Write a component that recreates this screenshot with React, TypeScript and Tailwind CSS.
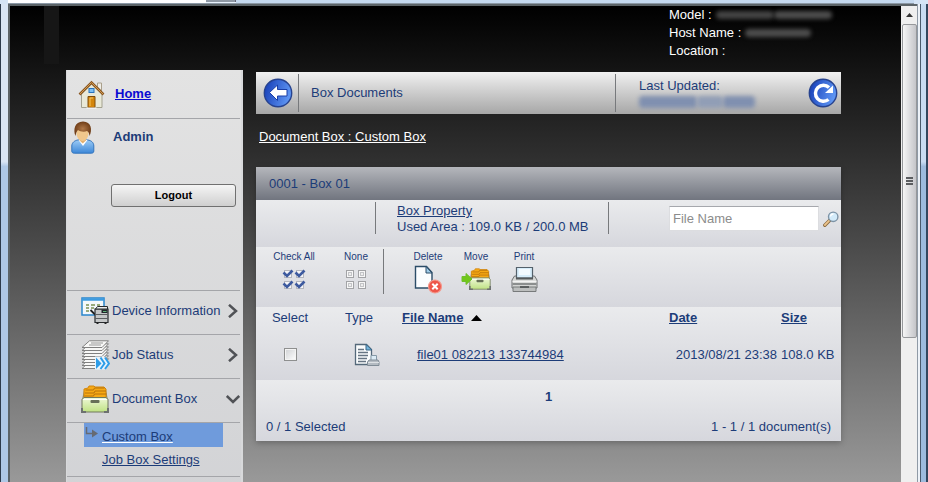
import { useState } from 'react';
import type { ReactNode } from 'react';

function HomeIcon() {
  return (
    <svg width="27" height="29" viewBox="0 0 27 29" aria-hidden="true">
      <path d="M19.500 3h4v8l-4-4z" fill="#efede6" stroke="#aaa08c" />
      <path d="M3.500 14 13.500 4 24 14v13.500H3.500z" fill="#e9e9d8" stroke="#a3a18f" />
      <path d="M1.500 14.500 13.500 2.500l12 12" fill="none" stroke="#8a5720" strokeWidth="2.600" />
      <path d="M2 14 13.500 2.500 25 14" fill="none" stroke="#d29a52" strokeWidth="1" />
      <rect x="11" y="8.500" width="5" height="4" fill="#7cc0f5" stroke="#2b74bd" />
      <path d="M10 27.500v-11h7v11z" fill="#d4860c" stroke="#7f4c0a" />
      <path d="M12 26v-8h3" fill="none" stroke="#f7c35a" />
      <path d="M8.500 28h10" stroke="#fff" strokeWidth="1" />
    </svg>
  );
}

function AdminIcon() {
  return (
    <svg width="24" height="33" viewBox="0 0 24 33" aria-hidden="true">
      <defs>
        <linearGradient id="shirt" x1="0" y1="0" x2="0" y2="1">
          <stop offset="0" stopColor="#9ccbf5" />
          <stop offset="1" stopColor="#3c87d8" />
        </linearGradient>
        <radialGradient id="hair">
          <stop offset="0" stopColor="#b07848" />
          <stop offset="1" stopColor="#6f3d17" />
        </radialGradient>
      </defs>
      <path d="M.8 30v-5c0-3.500 3-5.500 6-6h10c3.500.5 6 2.500 6 6v5c0 1.500-1 2.200-2.500 2.200h-17C1.600 32.200.8 31.500.8 30z" fill="url(#shirt)" stroke="#3475bd" />
      <path d="M7.500 19 12 25l4.500-6z" fill="#fff" />
      <path d="M8.500 16h6.500v3.500l-3.200 3-3.300-3z" fill="#e3b070" />
      <ellipse cx="11.500" cy="12.500" rx="6" ry="7.500" fill="#f0c78c" />
      <path d="M4.500 15C2 9 3.500.5 12 .5S21.500 9 18.500 15c-.2-3-1-4-2.500-5-3 1.500-7 .5-9-1-1.500 1.500-2 3-2.500 6z" fill="url(#hair)" />
    </svg>
  );
}

function DeviceIcon() {
  return (
    <svg width="28" height="27" viewBox="0 0 28 27" aria-hidden="true">
      <rect x="1" y="1" width="22" height="17" fill="#f4f8fb" stroke="#2a86cd" strokeWidth="1.500" />
      <path d="M1 2.500h22" stroke="#3d9be0" strokeWidth="2.500" />
      <path d="M5 8h3m2 0h4m2 0h3M5 11h3m2 0h3M5 14h3" stroke="#7b9054" strokeWidth="1.300" />
      <path d="M9.500 13l4.500 4.500" stroke="#222" strokeWidth="1.800" />
      <path d="M14 12h13v13.500H14z" fill="#c4c6c7" stroke="#272a2d" strokeWidth="1.200" />
      <path d="M14.500 12 16.500 9.500h10v2.500z" fill="#ecedee" stroke="#272a2d" />
      <path d="M14 17.500h13M14 21.500h13" stroke="#5b5e61" />
      <path d="M20.500 12.500h6V16h-6z" fill="#20262a" />
      <path d="M22 14.500h3.500" stroke="#62b37c" />
      <path d="M15.500 26.500h2m6 0h2" stroke="#222" strokeWidth="1.500" />
    </svg>
  );
}

function JobIcon() {
  return (
    <svg width="29" height="30" viewBox="0 0 29 30" aria-hidden="true">
      {[21, 18, 15, 12, 9, 6, 3, 0].map(y => (
        <path key={y} d="M1 7.500 8.500.8h19L21 7.500z" transform={`translate(0 ${y})`} fill="#f7f7f6" stroke="#808080" />
      ))}
      <path d="M10 3h12m-14 2h12" stroke="#999" />
      <path d="M14 16.500h9l6 6.500-5 6.500H14z" fill="#eaf4fc" />
      <path d="M15 17.500 20.500 23.500l-5.500 5.500z" fill="#2d9de8" />
      <path d="m19.500 17.500 4 6-4 5.500m4.500-11.500 4 6-4 5.500" fill="none" stroke="#2d9de8" strokeWidth="2" />
    </svg>
  );
}

function BoxIcon({ className }: { className: string }) {
  return (
    <svg className={className} viewBox="0 0 28 28" aria-hidden="true">
      <defs>
        <linearGradient id="boxFront" x1="0" y1="0" x2="0" y2="1">
          <stop offset="0" stopColor="#eef8d8" />
          <stop offset="1" stopColor="#bfe283" />
        </linearGradient>
      </defs>
      <path d="M3 5 1 15h26L25 5z" fill="#858b79" />
      <path d="M3 13V4l4-1 1-2h5l1 1h9l2 2v9z" fill="#f7a914" stroke="#d2860d" />
      <path d="M4.500 5h8l1-2h10M4 8h9l1-2h11M3.500 11h9l1-2h12" fill="none" stroke="#b8720a" />
      <path d="M1 14.500 3 12.500h22l2 2V25l-2 2H3l-2-2z" fill="url(#boxFront)" stroke="#71795e" />
      <path d="M2 14.500h24" stroke="#fff" />
      <rect x="9.500" y="15" width="9" height="3" rx="1" fill="#667057" />
      <path d="M1 23v4h4M27 23v4h-4" fill="none" stroke="#6d7170" strokeWidth="2" />
    </svg>
  );
}

function ChevronIcon({ open = false }: { open?: boolean }) {
  return (
    <svg width="14" height="14" viewBox="0 0 14 14" fill="none" stroke="#505256" strokeWidth="2.500" aria-hidden="true">
      {open ? <path d="m.8 4 6.200 6 6.200-6" /> : <path d="m3 .8 7 6.200-7 6.200" />}
    </svg>
  );
}

function BackIcon() {
  return (
    <svg width="30" height="30" viewBox="0 0 30 30" aria-hidden="true">
      <defs>
        <linearGradient id="blueOrb" x1="0" y1="0" x2="1" y2="0.3">
          <stop offset="0" stopColor="#1239b4" />
          <stop offset="1" stopColor="#5d94f2" />
        </linearGradient>
      </defs>
      <circle cx="15" cy="15" r="13.700" fill="url(#blueOrb)" stroke="#27438f" strokeWidth="1.400" />
      <path d="m6.500 14.500 8-7.500v4.500H24v6.500h-9.500v4.500z" fill="#fff" stroke="#1b3fa8" strokeWidth="1" />
    </svg>
  );
}

function RefreshIcon() {
  return (
    <svg width="30" height="30" viewBox="0 0 30 30" aria-hidden="true">
      <circle cx="15" cy="15" r="13.700" fill="url(#blueOrb)" stroke="#27438f" strokeWidth="1.400" />
      <path d="M20.500 21.500a8 8 0 1 1 .5-12" fill="none" stroke="#fff" strokeWidth="3.400" />
      <path d="M25 7.500v7.500h-8z" fill="#fff" />
    </svg>
  );
}

function SearchIcon() {
  return (
    <svg width="16" height="16" viewBox="0 0 16 16" aria-hidden="true">
      <path d="m1.800 14.200 5-5" stroke="#8b6b41" strokeWidth="3.400" strokeLinecap="round" />
      <path d="m1.900 14 4.300-4.300" stroke="#ecc48c" strokeWidth="1.800" strokeLinecap="round" />
      <circle cx="10.200" cy="5.800" r="4.700" fill="#d3ebfa" stroke="#7d93a6" strokeWidth="1.400" />
      <path d="M7.500 5.500a3 3 0 0 1 3-2.500" fill="none" stroke="#fff" strokeWidth="1.300" />
    </svg>
  );
}

const quad = [[1, 1], [13, 1], [1, 12], [13, 12]];

function CheckAllIcon() {
  return (
    <svg width="24" height="24" viewBox="0 0 24 24" aria-hidden="true">
      {quad.map(([x, y]) => (
        <g key={`${x}-${y}`} transform={`translate(${x} ${y + 1})`}>
          <rect x="1.500" y="1.500" width="7" height="7" fill="#f5f5f7" stroke="#b4b6bd" />
          <path d="m.5 3.500 3.500 3.500L9.500 1.500" fill="none" stroke="#3d5a9f" strokeWidth="2.600" />
        </g>
      ))}
    </svg>
  );
}

function NoneIcon() {
  return (
    <svg width="24" height="24" viewBox="0 0 24 24" aria-hidden="true">
      {quad.map(([x, y]) => (
        <g key={`${x}-${y}`} transform={`translate(${x} ${y + 1})`}>
          <rect x="1.500" y="1.500" width="7" height="7" fill="#f7f7f7" stroke="#a2a3a6" />
          <rect x="3.500" y="3.500" width="3" height="3" fill="#eee" stroke="#c3c4c7" />
        </g>
      ))}
    </svg>
  );
}

function DeleteIcon() {
  return (
    <svg width="28" height="29" viewBox="0 0 28 29" aria-hidden="true">
      <path d="M1.500 1.500h11l5.500 6V23h-16.500z" fill="#fbfdff" stroke="#2c4d68" strokeWidth="1.400" />
      <path d="M12 1.500V8h6z" fill="#9fcbe8" stroke="#2c4d68" />
      <circle cx="21" cy="21.500" r="6.500" fill="#ee5649" stroke="#f3998d" strokeWidth="1.200" />
      <path d="m18.300 18.800 5.400 5.400m0-5.400-5.400 5.400" stroke="#fff" strokeWidth="2" />
    </svg>
  );
}

function MoveIcon() {
  return (
    <span className="flex items-center">
      <svg className="-mr-1 z-10" width="12" height="14" viewBox="0 0 12 14" aria-hidden="true">
        <path d="M1 4.500h4V1.500L11 7l-6 5.500v-3H1z" fill="#70c719" stroke="#6fbe2c" />
      </svg>
      <BoxIcon className="w-[22px] h-6" />
    </span>
  );
}

function PrintIcon() {
  return (
    <svg width="27" height="27" viewBox="0 0 27 27" aria-hidden="true">
      <path d="M3.500 10h20l2.500 4v8H1v-8z" fill="#d4d5d4" stroke="#6e7172" />
      <path d="M5.500 1.500h16V12h-16z" fill="#d7edfa" stroke="#54616b" strokeWidth="1.200" />
      <path d="M8 3h11v6H8z" fill="#f3faff" />
      <path d="M5 12.500h17" stroke="#55595b" strokeWidth="2" />
      <path d="M1.500 15.500h24" stroke="#f3f3f3" strokeWidth="1.500" />
      <path d="M1.500 18h24" stroke="#8b8e8e" strokeWidth="2" />
      <path d="M2 21h23v4.500H2z" fill="#bcbebe" stroke="#777a7b" />
      <path d="M9 21h9" stroke="#44484a" strokeWidth="1.500" />
    </svg>
  );
}

function FileTypeIcon() {
  return (
    <svg width="26" height="24" viewBox="0 0 26 24" aria-hidden="true">
      <path d="M1.500 1.500h11l5 5V21.500h-16z" fill="#fafcfd" stroke="#55697a" strokeWidth="1.300" />
      <path d="M12 1.500V7h6z" fill="#75b5dc" stroke="#3b6686" />
      <path d="M4 6.500h6M4 9.500h10M4 12.500h10M4 15.500h9M4 18.500h8" stroke="#677583" strokeWidth="1.300" />
      <path d="M17 12.500h5.500V18H17z" fill="#dcebf5" stroke="#8599a7" />
      <path d="M15 17h9l1 2v3.500H13.500V19z" fill="#b4bbc2" stroke="#808c96" />
      <path d="M14 19.500h11" stroke="#dde1e4" />
    </svg>
  );
}

function Tool({ label, children }: { label: string; children: ReactNode }) {
  return (
    <button type="button" className="w-12 h-[46px] flex flex-col items-center text-[10px] leading-3 whitespace-nowrap cursor-pointer">
      <span className="pt-[2px]">{label}</span>
      <span className="h-8 flex items-center">{children}</span>
    </button>
  );
}

function NavItem({ icon, label, open }: { icon: ReactNode; label: string; open?: boolean }) {
  return (
    <a href="#" className="h-11 mr-px pb-1 pl-[14px] flex items-center border-b border-[#a4a5a9]">
      <span className="w-[31px] shrink-0 flex">{icon}</span>
      <span className="flex-1 whitespace-nowrap">{label}</span>
      <ChevronIcon open={open} />
    </a>
  );
}

// Values that are kept private show only as a smudge
function Redacted({ className }: { className: string }) {
  return <span className={`inline-block rounded-sm blur-[2px] ${className}`} aria-hidden="true" />;
}

function Sidebar() {
  return (
    <nav className="w-[177px] shrink-0 bg-linear-to-b from-[#e3e3e3] to-[#d0d1d4] border-l border-r-2 border-[#d8d9db] text-[#1c3c78]">
      <a href="#" className="h-[49px] mr-px pl-[11px] flex items-center gap-[10px] border-b border-[#a4a5a9] font-bold text-[#0a0ad2] underline">
        <HomeIcon />
        Home
      </a>
      <div className="h-[172px] mr-px border-b border-[#a4a5a9]">
        <div className="h-9 pl-1 flex items-center gap-[18px] font-bold">
          <AdminIcon />
          Admin
        </div>
        <div className="pt-[29px] pl-11">
          <button
            type="button"
            className="w-[125px] h-[23px] rounded-[3px] border border-[#707070] bg-linear-to-b from-[#f5f5f5] to-[#cfcfcf] text-[11px] font-bold text-black"
          >
            Logout
          </button>
        </div>
      </div>
      <NavItem icon={<DeviceIcon />} label="Device Information" />
      <NavItem icon={<JobIcon />} label="Job Status" />
      <NavItem icon={<BoxIcon className="w-7 h-7" />} label="Document Box" open />
      <div className="h-[54px] mr-px pl-[17px] border-b border-[#a4a5a9]">
        <div className="w-[139px] h-6 pt-[3px] flex items-center bg-[#6f9bdc]">
          <svg className="mb-2 ml-px mr-1" width="13" height="12" viewBox="0 0 13 12" aria-hidden="true">
            <path d="M1.500 0v6.500H8" fill="none" stroke="#666a72" strokeWidth="1.500" />
            <path d="M7 2.500 13 6.500l-6 4z" fill="#666a72" />
          </svg>
          <a href="#" className="underline decoration-white">Custom Box</a>
        </div>
        <a href="#" className="ml-[18px] leading-[26px] underline">Job Box Settings</a>
      </div>
    </nav>
  );
}

function TitleBar() {
  return (
    <div className="h-[42px] py-[2px] flex bg-linear-to-b from-[#f1f1f1] to-[#a7a7a7]">
      <button type="button" aria-label="Back" className="w-[43px] pl-[7px] border-r border-[#77797c]">
        <BackIcon />
      </button>
      <h1 className="flex-1 pl-3 leading-[38px]">Box Documents</h1>
      <div className="w-[226px] pl-[23px] pr-[3px] flex items-center justify-between border-l border-[#77797c]">
        <div className="flex flex-col gap-[2px] pb-px">
          <span className="leading-4">Last Updated:</span>
          <span className="flex">
            <Redacted className="w-[58px] h-3 bg-[#8090b0]" />
            <Redacted className="w-[26px] h-3 bg-[#919eb6]" />
            <Redacted className="w-8 h-3 bg-[#8090b0]" />
          </span>
        </div>
        <button type="button" aria-label="Refresh"><RefreshIcon /></button>
      </div>
    </div>
  );
}

const rowShade = 'bg-linear-to-b from-[#eaebed] to-[#d6d7dd]';

function DocumentPanel() {
  const [checked, setChecked] = useState(false);
  const [query, setQuery] = useState('');

  return (
    <section className="mt-[22px] shadow-[0_2px_6px_rgba(0,0,0,0.25)]">
      <h2 className="h-[33px] pl-[13px] leading-[34px] bg-linear-to-b from-[#b5b7bc] to-[#71757f]">0001 - Box 01</h2>

      {/* Box properties and search */}
      <div className={`h-[47px] pt-[2px] pl-[119px] pr-[2px] flex items-start ${rowShade}`}>
        <div className="w-[234px] h-8 pt-px pl-[21px] border-x border-[#77797c] whitespace-nowrap leading-4">
          <a href="#" className="underline">Box Property</a>
          <p>Used Area : 109.0 KB / 200.0 MB</p>
        </div>
        <form className="ml-auto mt-1 flex items-center gap-1" onSubmit={e => e.preventDefault()}>
          <input
            type="text"
            aria-label="File Name"
            placeholder="File Name"
            value={query}
            onChange={e => setQuery(e.target.value)}
            className="w-[150px] h-[25px] px-[3px] bg-white border border-[#dcdde0] border-t-[#a6a8ad] placeholder:text-[#8c8c8c] outline-none"
          />
          <button type="submit" aria-label="Search"><SearchIcon /></button>
        </form>
      </div>

      {/* Toolbar */}
      <div className={`h-[60px] pt-[2px] pl-[14px] flex ${rowShade}`}>
        <div className="w-[114px] h-[45px] pr-[3px] flex justify-between border-r border-[#77797c]">
          <Tool label="Check All"><CheckAllIcon /></Tool>
          <Tool label="None"><NoneIcon /></Tool>
        </div>
        <div className="ml-5 flex">
          <Tool label="Delete"><DeleteIcon /></Tool>
          <Tool label="Move"><MoveIcon /></Tool>
          <Tool label="Print"><PrintIcon /></Tool>
        </div>
      </div>

      <table className={`w-full table-fixed text-left ${rowShade}`}>
        <thead>
          <tr className="h-[22px]">
            <th className="w-[68px] p-0 text-center font-normal">Select</th>
            <th className="w-[70px] p-0 text-center font-normal">Type</th>
            <th className="py-0 pl-2">
              <a href="#" className="underline">File Name</a>
              <svg className="inline ml-2 mb-px" width="11" height="6" viewBox="0 0 11 6" aria-hidden="true">
                <path d="M5.500 0 11 6H0z" fill="#000" />
              </svg>
            </th>
            <th className="w-[112px] p-0"><a href="#" className="underline">Date</a></th>
            <th className="w-[60px] p-0"><a href="#" className="underline">Size</a></th>
          </tr>
        </thead>
        <tbody>
          <tr className="h-[51px]">
            <td className="p-0 text-center">
              <input
                type="checkbox"
                aria-label="Select file01 082213 133744984"
                checked={checked}
                onChange={e => setChecked(e.target.checked)}
                className="block mx-auto w-[13px] h-[13px] appearance-none border border-[#8e8f8f] bg-linear-to-br from-[#cfd1d4] to-white outline outline-[#f4f4f4] -outline-offset-2 checked:bg-[#33519b]"
              />
            </td>
            <td className="py-0 pl-[30px] pr-0"><FileTypeIcon /></td>
            <td className="py-0 pl-[23px]"><a href="#" className="underline">file01 082213 133744984</a></td>
            <td className="py-0 pl-0 pr-1 text-right whitespace-nowrap">2013/08/21 23:38</td>
            <td className="p-0 whitespace-nowrap">108.0 KB</td>
          </tr>
        </tbody>
      </table>

      {/* Paging */}
      <div className={`h-[61px] pt-[9px] ${rowShade}`}>
        <p className="text-center font-bold leading-4">1</p>
        <div className="pt-[14px] px-[10px] flex justify-between leading-4">
          <span>{checked ? 1 : 0} / 1 Selected</span>
          <span>1 - 1 / 1 document(s)</span>
        </div>
      </div>
    </section>
  );
}

export default function App() {
  return (
    <div className="h-screen flex flex-col overflow-hidden bg-[#d5e4f5] font-['Liberation_Sans',Arial,sans-serif] text-[13px] text-[#1c3c78]">
      {/* Bottom edge of the browser's tab strip */}
      <div className="h-1 shrink-0 ml-2 mr-[14px] flex border-b border-[#8b98a5] bg-[#e9f2fc]">
        <div className="w-[198px] bg-white" />
        <div className="w-[30px] h-[2px] bg-[#8f99a5] border-r border-[#667]" />
        <div className="flex-1 bg-[#c5d9ef]" />
      </div>

      <div className="flex-1 min-h-0 flex">
        <div className="w-2 shrink-0 border-l border-[#2d3b4c] bg-linear-to-b from-[#d9e5f4] from-33% to-[#aec8e6] to-34%" />
        <div className="flex-1 min-w-0 flex border-t-2 border-l-2 border-[#5c6468]">
          <main className="flex-1 min-w-0 overflow-hidden bg-linear-to-b/srgb from-black via-[#4a4a4a] to-[#999]">
            <header className="h-16 pl-[34px] pr-[60px] flex justify-between">
              <div className="w-[15px] h-[58px] bg-[#161616]" />
              <dl className="w-[172px] leading-[18px] text-white whitespace-nowrap">
                <div className="flex items-center gap-1">
                  <dt>Model :</dt>
                  <dd className="flex">
                    <Redacted className="w-[58px] h-2 bg-[#444]" />
                    <Redacted className="w-[58px] h-2 bg-[#4d4d4d]" />
                  </dd>
                </div>
                <div className="flex items-center gap-1">
                  <dt>Host Name :</dt>
                  <dd className="flex"><Redacted className="w-[66px] h-2 bg-[#4d4d4d]" /></dd>
                </div>
                <div><dt>Location :</dt></div>
              </dl>
            </header>
            <div className="min-h-full pl-14 pr-[60px] flex gap-[13px]">
              <Sidebar />
              <div className="flex-1 min-w-0 pt-[2px]">
                <TitleBar />
                <p className="mt-[15px] pl-[3px] leading-4 text-white">
                  <a href="#" className="underline">Document Box : Custom Box</a>
                </p>
                <DocumentPanel />
              </div>
            </div>
          </main>

          {/* Scrollbar */}
          <div className="w-4 shrink-0 flex flex-col items-center bg-[#efefef]" aria-hidden="true">
            <div className="h-[18px] flex items-center">
              <svg width="7" height="4" viewBox="0 0 7 4">
                <path d="M3.500 0 7 4H0z" fill="#333" />
              </svg>
            </div>
            <div className="w-[15px] h-[66%] flex flex-col items-center justify-center gap-px rounded-[2px] border border-[#96989b] bg-linear-to-r from-[#f6f6f6] to-[#c4c5c9]">
              <div className="w-[7px] h-[2px] bg-[#5b5d60]" />
              <div className="w-[7px] h-[2px] bg-[#5b5d60]" />
              <div className="w-[7px] h-[2px] bg-[#5b5d60]" />
            </div>
          </div>
        </div>
        <div className="w-[11px] shrink-0 border-l border-[#8f9aa6] bg-[#edf2f8] flex justify-end">
          <div className="w-2 border-l border-r-2 border-l-[#4a5a6c] border-r-[#33475e] bg-linear-to-b from-[#c9dcf2] from-33% to-[#9dbbdd] to-34%" />
        </div>
      </div>
    </div>
  );
}
